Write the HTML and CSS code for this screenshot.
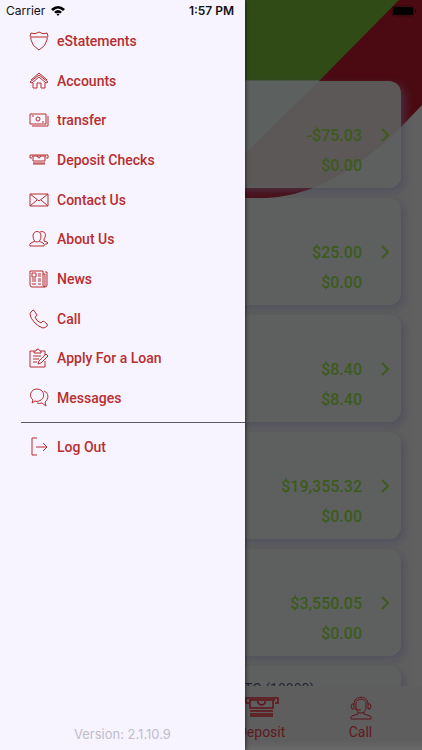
FILE: index.html
```html
<!DOCTYPE html>
<html lang="en">
<head>
<meta charset="utf-8">
<meta name="viewport" content="width=device-width, initial-scale=1">
<title>Accounts</title>
<link rel="stylesheet" href="styles.css">
</head>
<body>
<div class="app">
  <svg class="backdrop" viewBox="0 0 422 210" preserveAspectRatio="xMaxYMin meet" aria-hidden="true">
    <path class="backdrop-red" d="M0 0H422V105L402 126C366 162 324 191 278 197Q262 199 240 198H0Z"/>
    <path class="backdrop-green" d="M0 0H399L320 80H0Z"/>
    <path class="backdrop-pale" d="M0 80H320L247 152L180 188H0Z"/>
  </svg>
  <main class="accounts">
    <article class="card"><p class="amounts"><span>-$75.03</span><span>$0.00</span></p><svg class="chevron" viewBox="0 0 10 14"><path d="M2 1L8 7L2 13"/></svg></article>
    <article class="card"><p class="amounts"><span>$25.00</span><span>$0.00</span></p><svg class="chevron" viewBox="0 0 10 14"><path d="M2 1L8 7L2 13"/></svg></article>
    <article class="card"><p class="amounts"><span>$8.40</span><span>$8.40</span></p><svg class="chevron" viewBox="0 0 10 14"><path d="M2 1L8 7L2 13"/></svg></article>
    <article class="card"><p class="amounts"><span>$19,355.32</span><span>$0.00</span></p><svg class="chevron" viewBox="0 0 10 14"><path d="M2 1L8 7L2 13"/></svg></article>
    <article class="card"><p class="amounts"><span>$3,550.05</span><span>$0.00</span></p><svg class="chevron" viewBox="0 0 10 14"><path d="M2 1L8 7L2 13"/></svg></article>
    <article class="card card-next"><h2 class="card-title">TO (10000)</h2></article>
  </main>
  <nav class="tabs">
    <a class="tab" href="#deposit">
      <svg class="tab-icon tab-icon-wide" viewBox="0 0 34 24"><path d="M4 7H1V2H33V7H30M4 4H30M5 4V12H28V4M13 5V7Q17 11 20 7V5"/><path d="M5 15H28M5 18H28M5 20H28"/></svg>
      <span>Deposit</span>
    </a>
    <a class="tab" href="#call">
      <svg class="tab-icon" viewBox="0 0 24 24"><path d="M5 8C5-1 19-1 19 8M5 8V13H3Q1 10 3 8ZM19 8V13H21Q23 10 21 8ZM7 7C7 2 17 2 17 7V11C17 19 7 19 7 11ZM6 13Q7 14 12 14M9 16V18L3 20Q1 21 2 23H22Q23 21 21 20L15 18V16"/></svg>
      <span>Call</span>
    </a>
  </nav>
</div>

<aside class="drawer">
  <ul class="menu">
    <li><a class="item" href="#estatements"><svg class="icon" viewBox="0 0 20 20"><path d="M2 2Q6 4 10 1Q14 4 18 2L19 5Q18 6 18 9Q17 15 10 19Q3 15 2 9Q2 6 1 5ZM2 6H18"/></svg>eStatements</a></li>
    <li><a class="item" href="#accounts"><svg class="icon" viewBox="0 0 20 20"><path d="M1 11L10 4L19 11L17 12L10 6L3 12ZM2 9L10 2L18 9M4 12V17H8V12H12V17H16V12"/></svg>Accounts</a></li>
    <li><a class="item" href="#transfer"><svg class="icon" viewBox="0 0 20 20"><path d="M1 4H17V14H1ZM3 16H19V6M3 6H5M13 12H15"/><ellipse cx="9" cy="9" rx="2" ry="2"/></svg>transfer</a></li>
    <li><a class="item" href="#deposit-checks"><svg class="icon" viewBox="0 0 20 20"><path d="M3 8H1V5H19V8H17M3 6H17M4 6V11H16V6M8 6Q10 10 12 6M4 13H16M4 14H16"/></svg>Deposit Checks</a></li>
    <li><a class="item" href="#contact"><svg class="icon" viewBox="0 0 20 20"><path d="M1 4H19V16H1ZM1 4L10 11L19 4M1 16L8 10M19 16L12 10"/></svg>Contact Us</a></li>
    <li><a class="item" href="#about"><svg class="icon" viewBox="0 0 20 20"><path d="M4 7C4 1 12 1 12 7C12 11 10 13 8 13C6 13 4 11 4 7ZM6 12L2 14Q0 15 1 17H15Q16 15 14 14L10 12M11 3C16 1 18 6 15 10V12L18 13Q20 14 18 15H16"/></svg>About Us</a></li>
    <li><a class="item" href="#news"><svg class="icon" viewBox="0 0 20 20"><path d="M1 2H14V16Q14 18 16 18H3Q1 18 1 16ZM14 5H16V17M16 3H18V16Q18 18 16 18M3 4H7V8H3ZM9 5H12M9 7H12M3 10H7M9 10H12M3 12H7M9 12H12M3 15H7M9 15H12"/></svg>News</a></li>
    <li><a class="item" href="#phone"><svg class="icon" viewBox="0 0 20 20"><path d="M2 3L4 1Q5 1 6 3L8 6Q8 7 6 8Q7 12 12 14L14 12Q15 12 18 15Q19 16 18 17Q16 19 14 19Q10 18 6 14Q1 9 1 5Q1 4 2 3Z"/></svg>Call</a></li>
    <li><a class="item" href="#loan"><svg class="icon" viewBox="0 0 20 20"><path d="M5 3H1V19H16V13M12 3H16V7M5 5V3H7Q7 1 9 1Q10 1 11 3H12V5ZM4 8H12M4 11H10M4 14H8M9 16L10 13L17 6L19 8L12 15Z"/></svg>Apply For a Loan</a></li>
    <li><a class="item" href="#messages"><svg class="icon" viewBox="0 0 20 20"><path d="M3 15L4 12C-1 8 2 1 8 1C16 1 17 11 10 13Q8 14 6 13ZM15 3C20 5 20 11 16 14L17 18L13 15Q10 16 8 15"/></svg>Messages</a></li>
  </ul>
  <div class="session">
    <button class="item" type="button"><svg class="icon" viewBox="0 0 20 20"><path d="M8 1H3V18H8M7 10H18M14 6L18 10L14 14"/></svg>Log Out</button>
  </div>
  <p class="version">Version: 2.1.10.9</p>
</aside>

<header class="status">
  <div class="network">
    <span>Carrier</span>
    <svg class="wifi" viewBox="0 0 14 10"><path d="M0 3Q7-3 14 3L12 5Q7 0 2 5ZM3 6Q7 2 11 6L9 7.600Q7 6 5 7.600ZM5.500 8.200Q7 7 8.500 8.200L7 10Z"/></svg>
  </div>
  <time class="clock">1:57 PM</time>
  <svg class="battery" viewBox="0 0 26 12"><rect class="battery-case" x="1" y="1" width="22" height="10" rx="3"/><rect x="2" y="2" width="20" height="8" rx="2"/><path d="M24 4Q26 6 24 8Z"/></svg>
</header>
</body>
</html>
```
FILE: styles.css
```css
* { box-sizing: border-box; }

body {
  position: relative;
  min-height: 100vh;
  margin: 0;
  overflow: hidden;
  background: #606060;
  font-family: Roboto, "Liberation Sans", sans-serif;
}

ul, p, h2 { margin: 0; padding: 0; list-style: none; }
a { color: inherit; text-decoration: none; }

.app {
  position: relative;
  display: flex;
  flex-direction: column;
  height: 100vh;
}

.backdrop { position: absolute; top: 0; right: 0; width: 100%; }
.backdrop-red { fill: #4b0a12; }
.backdrop-green { fill: #314b17; }
.backdrop-pale { fill: #4c5a46; }

.accounts {
  position: relative;
  flex: 1;
  min-height: 0;
  display: flex;
  flex-direction: column;
  gap: 10px;
  padding: 81px 21px 0;
  overflow: hidden;
}

.card {
  flex: none;
  display: flex;
  justify-content: flex-end;
  align-items: flex-start;
  gap: 18px;
  min-height: 107px;
  padding: 40px 11px 7px;
  border-radius: 12px;
  background: rgba(94, 97, 97, 0.9);
  box-shadow: 4px 4px 8px rgba(72, 72, 92, 0.6);
}

.card-next { justify-content: flex-start; padding-top: 13px; }
.card-title { margin-left: 212px; font-size: 14px; line-height: 20px; font-weight: 400; color: #25252f; }

.amounts {
  display: flex;
  flex-direction: column;
  align-items: flex-end;
  font-size: 16px;
  line-height: 30px;
  font-weight: 500;
  color: #3c5b1c;
}

.chevron { width: 10px; height: 14px; margin-top: 7px; fill: none; stroke: #3c5b1c; stroke-width: 2; }

.tabs {
  position: relative;
  display: grid;
  grid-template-columns: repeat(4, 1fr);
  padding: 10px 12px 8px 14px;
  background: linear-gradient(#5e5e5e 85%, #686868);
  color: #5f1a1d;
}

.tab { display: flex; flex-direction: column; align-items: center; gap: 2px; font-size: 14px; line-height: 20px; }
.tab:first-child { grid-column: 3; }
.tab-icon { width: 24px; height: 24px; fill: none; stroke: #5f1419; stroke-width: 1; }
.tab-icon-wide { width: 34px; stroke-width: 1.5; }

.drawer {
  position: absolute;
  inset: 0 42% 0 0;
  display: flex;
  flex-direction: column;
  padding-top: 21px;
  background: #f7f4ff;
  box-shadow: 0 0 4px #111;
  color: #b72e2f;
}

.menu { display: grid; grid-auto-rows: 1fr; min-height: 397px; }
.menu li { display: grid; }

.item {
  display: flex;
  align-items: center;
  gap: 8px;
  padding: 0 0 0 29px;
  border: 0;
  background: none;
  color: inherit;
  font: 500 14px/20px Roboto, "Liberation Sans", sans-serif;
}

.icon { width: 20px; height: 20px; fill: none; stroke: currentColor; stroke-width: 1; stroke-linejoin: round; }

.session { margin: 4px 0 0 21px; padding-top: 14px; border-top: 1px solid #5b5867; }
.session .item { padding-left: 8px; }

.version { margin-top: auto; padding-bottom: 6px; text-align: center; font: 400 13px/20px Inter, sans-serif; color: #bfbccb; }

.status {
  position: absolute;
  inset: 0 0 auto;
  display: grid;
  grid-template-columns: 1fr auto 1fr;
  align-items: center;
  height: 21px;
  padding: 0 5px 0 6px;
  font: 400 12px/20px Inter, sans-serif;
  color: #111;
}

.network { display: flex; align-items: center; gap: 6px; }
.wifi { width: 14px; height: 10px; }
.clock { font-weight: 600; }
.battery { width: 26px; height: 12px; justify-self: end; }
.battery-case { fill: none; stroke: #35070b; }
```
